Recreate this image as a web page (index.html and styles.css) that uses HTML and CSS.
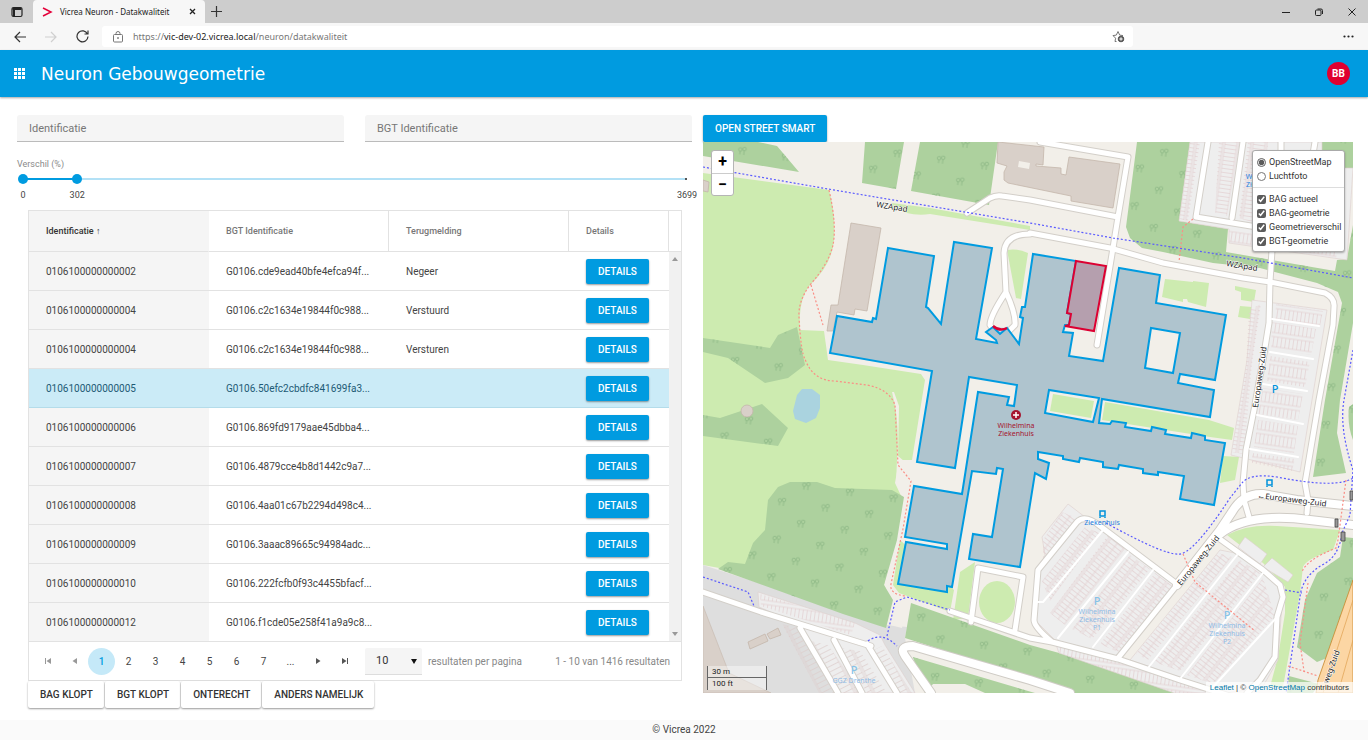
FILE: index.html
```
<!DOCTYPE html>
<html lang="nl">
<head>
  <meta charset="UTF-8" />
  <title>Vicrea Neuron - Datakwaliteit</title>
  <meta name="viewport" content="width=device-width, initial-scale=1.0" />
  <link rel="stylesheet" href="styles.css">
</head>
<body>
  <!-- Browser window -->
  <div class="tabbar">
    <button class="icon-btn tab-menu" aria-label="Tabbladen">
      <svg width="12" height="12" viewBox="0 0 12 12"><rect x="1" y="1.500" width="10" height="9" rx="1.500" fill="none" stroke="#222" stroke-width="1.200"/><path d="M1.500 3h9M3 3v7" stroke="#222" stroke-width="2"/></svg>
    </button>
    <div class="tab">
      <svg width="11" height="10" viewBox="0 0 11 10"><path d="M1 1l8 4-8 4" fill="none" stroke="#e4003a" stroke-width="1.500"/></svg>
      <span class="tab-title">Vicrea Neuron - Datakwaliteit</span>
      <button class="icon-btn" aria-label="Sluiten">
        <svg width="7" height="7" viewBox="0 0 7 7"><path d="M1 1l5 5M6 1l-5 5" stroke="#222" stroke-width="1.300"/></svg>
      </button>
    </div>
    <button class="icon-btn" aria-label="Nieuw tabblad">
      <svg width="11" height="11" viewBox="0 0 11 11"><path d="M5.500 0v11M0 5.500h11" stroke="#333" stroke-width="1.200"/></svg>
    </button>
    <div class="window-buttons">
      <button class="icon-btn" aria-label="Minimaliseren"><svg width="8" height="8" viewBox="0 0 8 8"><path d="M0 4.500h8" stroke="#222"/></svg></button>
      <button class="icon-btn" aria-label="Herstellen"><svg width="8" height="8" viewBox="0 0 8 8" fill="none" stroke="#222"><rect x=".5" y="2" width="5.500" height="5.500" rx="1"/><path d="M2.500 1h3.500a1.500 1.500 0 0 1 1.500 1.500v3.500"/></svg></button>
      <button class="icon-btn" aria-label="Venster sluiten"><svg width="8" height="8" viewBox="0 0 8 8"><path d="M.5.5l7 7M7.500.5l-7 7" stroke="#222"/></svg></button>
    </div>
  </div>

  <div class="toolbar">
    <button class="icon-btn" aria-label="Terug"><svg width="12" height="12" viewBox="0 0 12 12" fill="none" stroke="#333" stroke-width="1.200"><path d="M12 6H1M6 1L1 6l5 5"/></svg></button>
    <button class="icon-btn" aria-label="Vooruit"><svg width="12" height="12" viewBox="0 0 12 12" fill="none" stroke="#d0d0d0" stroke-width="1.200"><path d="M0 6h11M6 1l5 5-5 5"/></svg></button>
    <button class="icon-btn" aria-label="Vernieuwen"><svg width="13" height="13" viewBox="0 0 13 13" fill="none" stroke="#333" stroke-width="1.200"><path d="M11.500 4A5.500 5.500 0 1 0 12 6.500M12 .5V4H8.500"/></svg></button>
    <div class="address">
      <svg width="10" height="12" viewBox="0 0 10 12" fill="none" stroke="#777"><rect x=".5" y="3.500" width="9" height="7.500" rx="1"/><path d="M3 3.500V2.500a2 2 0 0 1 4 0v1"/><circle cx="5" cy="7" r=".5" fill="#777"/></svg>
      <span class="url">https://<b>vic-dev-02.vicrea.local</b>/neuron/datakwaliteit</span>
      <svg width="13" height="13" viewBox="0 0 13 13" fill="none" stroke="#777"><path d="M4.500 11.500l-1.500 0 .6-3.300L1 5.600l3.300-.5L6 1.500l1.700 3.600 3.300.5"/><circle cx="9" cy="9" r="2.800" fill="#555" stroke="#555"/><path d="M9 7.300v3.400M7.300 9h3.400" stroke="#fff"/></svg>
    </div>
    <button class="icon-btn more" aria-label="Meer"><svg width="11" height="3" viewBox="0 0 11 3" fill="#222"><circle cx="1.500" cy="1.500" r="1.100"/><circle cx="5.500" cy="1.500" r="1.100"/><circle cx="9.500" cy="1.500" r="1.100"/></svg></button>
  </div>

  <header class="app-header">
    <button class="icon-btn" aria-label="Menu">
      <svg width="11" height="11" viewBox="0 0 11 11" fill="#fff"><path d="M0 0h3v3H0zM4 0h3v3H4zM8 0h3v3H8zM0 4h3v3H0zM4 4h3v3H4zM8 4h3v3H8zM0 8h3v3H0zM4 8h3v3H4zM8 8h3v3H8z"/></svg>
    </button>
    <h1>Neuron Gebouwgeometrie</h1>
    <button class="avatar">BB</button>
  </header>

  <main>
    <section class="list">
      <div class="filters">
        <input type="text" placeholder="Identificatie" aria-label="Identificatie">
        <input type="text" placeholder="BGT Identificatie" aria-label="BGT Identificatie">
      </div>

      <label class="slider-label" for="verschilMin">Verschil (%)</label>
      <div class="slider">
        <div class="slider-track"><div class="slider-fill" style="width: 8.16%"></div></div>
        <input type="range" id="verschilMin" min="0" max="3699" value="0">
        <input type="range" id="verschilMax" min="0" max="3699" value="302" aria-label="Verschil maximaal (%)">
      </div>
      <div class="slider-values">
        <div><span style="left: 0%">0</span><span style="left: 8.16%">302</span><span style="left: 100%">3699</span></div>
      </div>

      <div class="grid">
        <div class="grid-main">
          <table>
            <thead>
              <tr><th class="sorted">Identificatie <i>↑</i></th><th>BGT Identificatie</th><th>Terugmelding</th><th>Details</th></tr>
            </thead>
            <tbody id="rows"></tbody>
          </table>
          <div class="scrollbar">
            <div class="scrollbar-head"></div>
            <div class="scrollbar-track">
              <svg width="6" height="4" viewBox="0 0 6 4"><path d="M0 4l3-4 3 4z" fill="#999"/></svg>
              <svg width="6" height="4" viewBox="0 0 6 4"><path d="M0 0l3 4 3-4z" fill="#999"/></svg>
            </div>
          </div>
        </div>
        <div class="pager">
          <button class="page" disabled aria-label="Eerste"><svg width="6" height="6" viewBox="0 0 6 6" fill="#999"><path d="M0 0h1v6H0zM6 0v6L1.500 3z"/></svg></button>
          <button class="page" disabled aria-label="Vorige"><svg width="6" height="6" viewBox="0 0 6 6" fill="#999"><path d="M5 0v6L.5 3z"/></svg></button>
          <button class="page current">1</button>
          <button class="page">2</button>
          <button class="page">3</button>
          <button class="page">4</button>
          <button class="page">5</button>
          <button class="page">6</button>
          <button class="page">7</button>
          <button class="page">...</button>
          <button class="page" aria-label="Volgende"><svg width="6" height="6" viewBox="0 0 6 6" fill="#555"><path d="M1 0v6l4.500-3z"/></svg></button>
          <button class="page" aria-label="Laatste"><svg width="6" height="6" viewBox="0 0 6 6" fill="#555"><path d="M5 0h1v6H5zM0 0v6l4.500-3z"/></svg></button>
          <div class="page-size">
            <select id="pageSize"><option>10</option><option>20</option><option>50</option></select>
            <svg width="6" height="5" viewBox="0 0 6 5"><path d="M0 0h6L3 5z" fill="#111"/></svg>
          </div>
          <label for="pageSize">resultaten per pagina</label>
          <span class="total">1 - 10 van 1416 resultaten</span>
        </div>
      </div>

      <div class="actions">
        <button>BAG KLOPT</button>
        <button>BGT KLOPT</button>
        <button>ONTERECHT</button>
        <button>ANDERS NAMELIJK</button>
      </div>
    </section>

    <section class="map-side">
      <button class="primary street">OPEN STREET SMART</button>
      <div class="map">
        <svg class="tiles" viewBox="703 142 650 551" preserveAspectRatio="xMidYMid slice">
          <defs>
            <pattern id="trees" width="44" height="38" patternUnits="userSpaceOnUse" patternTransform="rotate(8)">
              <g fill="none" stroke="#8db885" stroke-width=".8">
                <path d="M6 12v-3M10 12v-4M28 31v-3M32 31v-4"/>
                <circle cx="6" cy="7" r="1.800"/><circle cx="10" cy="6" r="1.800"/>
                <circle cx="28" cy="26" r="1.800"/><circle cx="32" cy="25" r="1.800"/>
              </g>
            </pattern>
            <pattern id="bays" width="14" height="4" patternUnits="userSpaceOnUse" patternTransform="rotate(8)">
              <path d="M1 .5h12M1 0v4M13 0v4" stroke="#e3cfd0" stroke-width=".7" fill="none"/>
            </pattern>
            <pattern id="baysUp" width="4" height="14" patternUnits="userSpaceOnUse" patternTransform="rotate(8)">
              <path d="M.5 2v10M0 2h4M0 12h4" stroke="#e3cfd0" stroke-width=".7" fill="none"/>
            </pattern>
            <pattern id="baysTilt" width="18" height="4" patternUnits="userSpaceOnUse" patternTransform="rotate(38)">
              <path d="M1 .5h16M1 0v4M9 0v4M17 0v4" stroke="#e3cfd0" stroke-width=".7" fill="none"/>
            </pattern>
            <pattern id="baysLeft" width="16" height="5" patternUnits="userSpaceOnUse" patternTransform="rotate(-27)">
              <path d="M1 .5h14M1 0v5M15 0v5" stroke="#dccdcc" stroke-width=".7" fill="none"/>
            </pattern>
            <g id="wood">
              <path d="M703 142h55l19 4 22 26-96-16zM865 142h39l-8 47-34-6zM920 142h78l-9 63-78-14z"/>
              <path d="M703 338l67 10 8-13 19-8 8 38-17 13-23 5-37-25-25-6zM703 415l17 3 42-14 26 24-10 18-75-10z"/>
              <path d="M718 569l10-7 17 2 8-21 12-13 3-30 10-13 12-5h27l18 6 57 2 12 7-7 43-13 45 9 15-7 28-43-14z"/>
              <path d="M911 603l119 42 175 48h-130l-45-15-125-40zM913 657l122 36h-50l-20-9h-32l-8 9-7-20z"/>
              <path d="M1137 142h53l-11 79 49 8-2 23 109 19 2-11 10-1 6-34v98l-13 77-3 33 9 40-33 4 12-77 17-97-4-11-21-9-57-15-47-5-50-11-21-4-12-10-4-11z"/>
              <path d="M1322 142h31v27l-31-2zM1349 407l4-3v36q-6-15-4-33z"/>
              <path d="M1353 538l-10-1-3 20-23 16-12 27-8 47 20 15 10-4 26-75zM1289 676l30 8-6 9h-26z"/>
            </g>
            <g id="streets">
              <path d="M967 213l23-15q6-3 12-2l28 4 88 17M1040 142l88 15-10 60-5 31-16 97M1030 234q-25 0-26 19l2 39q-16 24-16 33l5 8M1006 292q10 22 9 33l-8 8"/>
              <path d="M1030 233l80 15 53 15 80 15 27 4 55 11q10 5 9 14l-1 18-14 75-14 83 3 17-1 13M1272 250l-2 32-1 41-6 37-9 50-8 40-3 33 1 17 5 17"/>
              <path d="M1208 142l-12 75 61 10M1243 142l-11 76M1281 142v20M1315 142l-2 12"/>
              <path d="M950 611l80 27 22 4 66 17 62 21 50 16M1052 642q-18-15-18-22l4-50 39-48q8-8 23 4l77 58M1217 537l46 33 17 15 3 12-6 20-2 40-15 23-13 13M978 568l45 9-8 53M978 568l-7 54M1177 585l-59 73"/>
              <path d="M703 592l58 20 110 34M800 628l38 65M834 640l28 53M867 644l30 49"/>
            </g>
            <path id="mainRoads" d="M1353 506l-56-6-34-6q-20-1-31 18l-12 18-43 55M1353 525l-43-5q-62-8-90 14M931 693l-26-37q-7-10 8-10l117 34 40 13"/>
          </defs>
          <rect x="703" y="142" width="650" height="551" fill="#f2efe9"/>

          <!-- grass -->
          <g fill="#cdebb0">
            <path d="M703 173L829 190Q836 215 834 240T810 285Q798 300 800 330L824 331 828 360 863 365 921 374 925 380 912 460 899 460 895 483 903 500 884 585 893 600 703 565z"/>
            <path d="M892 203l38 5 100 18v4l-100-16q-20 3-38-7z"/>
            <path d="M1007 250q10-2 21 3l-7 46-5-1z"/>
            <path d="M1165 279l28 3v-1l16 2-3 24-18-5-1-3h-4v3l-21-5z"/>
            <path d="M1235 286l21 4-2 12-13-2v-8l-6-2zM1240 306l12 1-2 12-12-2z"/>
            <path d="M1105 402l104 18 25 8-2 12-22-3-108-17zM1223 456l16 1-4 23-15 3z"/>
            <path d="M900 540l-7 45 6 8 51 19 4-22zM960 572l15-10-7 56-15 2z"/>
            <path d="M1227 535q20-11 50-9l63 4-7 20q-27 9-30 17l-3 26-17 94h-13l8-30 7-44v-26l-22-24z"/>
            <ellipse cx="997" cy="602" rx="18" ry="21"/>
          </g>

          <!-- built-up ground -->
          <path d="M703 565l185 60 19 2-2 11 10 55H703z" fill="#dedede"/>
          <path d="M703 606l26 67 42 20h-68z" fill="#d9d0c9" stroke="#c9bbb2" stroke-width=".7"/>
          <!-- dirt strip along the footpath -->
          <path d="M892 392q8 30 5 68l-1 24 8 14-5 42-14 50 6 12-5 22 16 4 4-24-12-8-6-10 22-120-12-10 1-50-5-14z" fill="#f2efe9"/>

          <use href="#wood" fill="#add19e"/>
          <use href="#wood" fill="url(#trees)"/>
          <path d="M797 395l5-6h10l8 6v13l-4 10-10 5-11-4-2-8z" fill="#aad3df"/>

          <!-- parking -->
          <g fill="#eee" stroke="#ddcfcc" stroke-width=".6">
            <path d="M1190 142h132v26h31l-6 92-118-17v-14l-50-8z"/>
            <path d="M1252 300l75 10-27 162-69-17 16-95z"/>
            <path d="M1068 504l17 13 18 11 72 57-55 72-65-17-20-20 2-47 8-18-3-18z"/>
            <path d="M1220 550l15 3 30 20 18 17-5 70-16 28-37 5-95-33z"/>
            <path d="M1238 547l7-10 22 17-7 10zM1263 567l9-9 21 17-5 7z"/>
            <path d="M758 592l97 31 25 12 5 10 30 48H837l-38-69-40-17z"/>
            <path d="M1055 642l155 47-3 4h-33l-115-40z"/>
          </g>
          <path d="M1190 142l10 0-12 79-9-2zM1219 142h21l-13 74-12-3zM1248 142h20l-5 84-24-8zM1249 310l12-6-9 60-8 90-12-2 14-86z" fill="url(#bays)"/>
          <path d="M1276 304l47 7-3 15-45-6zM1272 322l44 7-5 26-40-7zM1270 356l40 6-5 25-38-6zM1263 388l40 6-5 26-40-6zM1258 420l40 6-4 27-40-6zM1252 453l43 6-3 12-40-8zM1229 230l110 16-3 12-107-15z" fill="url(#baysUp)"/>
          <path d="M1062 512l15 6-34 42v-20zM1085 527l15 6-50 68-8-20zM1108 535l17 14-60 76-15-12zM1130 555l20 14-58 70-20-10zM1155 573l18 13-55 66-18-8zM1218 553l14 4-84 103-12-6zM1240 560l20 13-80 98-26-9zM1263 578l12 38-62 68-26-9z" fill="url(#baysTilt)"/>
          <path d="M1055 642l155 47-3 4h-33l-115-40zM760 594l95 29-4 12-90-29z" fill="url(#baysUp)"/>
          <path d="M782 624l17 4 38 65h-18zM806 640l22 5 34 48h-22zM840 648l20 3 27 42h-20zM874 650l8-4 30 47h-16z" fill="url(#baysLeft)"/>

          <!-- buildings -->
          <g fill="#d9d0c9" stroke="#c4b6ab" stroke-width=".8">
            <path d="M851 223l30 5-14 83-12-2-1 6-17-3-4 19h-6l4-26h7z"/>
            <path d="M703 180l6 2-1 10-5-1z"/>
            <path d="M998 142l46 5-1 18-7-1v2l25 2v6l5 1 3-18 51 7-7 44-42-7v-5l-63-13-4-3v-8l3-6-10-3z"/>
            <path d="M748 642l17-8 3 7-18 8zM767 634l11-6 3 7-11 4z"/>
            <circle cx="747" cy="411" r="6"/>
          </g>
          <path d="M1019 161l11 2-1 6-11-2z" fill="#f2efe9"/>

          <!-- motorway -->
          <path d="M1353 580l-35 100-2 13h37z" fill="#fcd6a4" stroke="#c8872b" stroke-width=".8"/>
          <path d="M1353 600l-30 93M1353 640l-15 53" stroke="#e0a050" stroke-width=".7" fill="none"/>

          <!-- roads: casing first, then white -->
          <g fill="none" stroke-linecap="round" stroke-linejoin="round">
            <use href="#streets" stroke="#d3cfc9" stroke-width="7"/>
            <use href="#mainRoads" stroke="#cfcbc5" stroke-width="10"/>
            <use href="#streets" stroke="#fff" stroke-width="5"/>
            <use href="#mainRoads" stroke="#fff" stroke-width="8"/>
            <path d="M1272 319l47 7M1270 352l43 7M1263 384l44 7M1257 415l46 9M1250 449l48 8M1103 530l-48 58-12 14h-7M1128 552l-70 86M1153 570l-60 77M1237 555l-89 113M1263 573l-83 106M1277 617l-64 70" stroke="#fff" stroke-width="2"/>
          </g>

          <!-- cycle and foot paths -->
          <g fill="none" stroke="#5a5aff" stroke-width="1.200" stroke-dasharray="2 2">
            <path d="M703 167l125 22 202 34 83 15 130 20 110 20M703 577l45 15 6 14M887 636l8-34 12-5 43 13M868 641q14-10 29 5"/>
            <path d="M1106 523q58 32 72 31 14 2 52-56l12-15q8-10 35-6 60 12 76 1M1353 350l-9 50q-5 28 9 70l-3 45-8 18q-3 24-20 32-20 12-22 32l-16 110M1285 590l17 3"/>
          </g>
          <g fill="none" stroke="#fa8e85" stroke-width="1.200" stroke-dasharray="2 2">
            <path d="M829 190q8 35 4 55-4 18-23 40-12 16-11 32 2 36 6 42 8 22 30 22l32 4q22 4 28 20l3 60 13 16-8 48-12 55q-2 10 14 12M811 285l12 40"/>
            <path d="M1193 219l-10 8-4 35M1183 554l12 28 60 49M1346 480l-8 60-2 8q-30 12-34 24M1308 583l-8 60 4 28M1288 666l30 10"/>
          </g>

          <!-- building geometry -->
          <path d="M993 327l14 1 1 6-8 4-9-2z" fill="#b9dcee"/>
          <path class="geom" d="M888 248L934 256 926 307 928 308 941 324 954 242 992 248 976 339 997 343 996 340 986 332 993 327 1000 334 1007 328 1019 344 1023 318 1020 317 1022 307 1025 307 1033 254 1076 261 1067 313 1071 314 1069 325 1065 325 1063 332 1073 333 1069 356 1103 361 1119 268 1160 275 1156 303 1226 315 1215 380 1180 374 1178 383 1214 390 1210 417 1102 399 1099 423 1110 424 1112 421 1126 423 1125 427 1151 431 1152 427 1166 430 1165 434 1191 438 1192 433 1205 436 1205 440 1225 443 1214 505 1180 499 1184 476 1158 472 1158 475 1143 473 1143 469 1119 465 1118 469 1103 467 1103 462 1080 458 1079 462 1063 459 1063 456 1038 452 1038 459 1049 463 1046 479 1035 473 1020 567 969 559 973 534 992 537 1003 469 997 468 996 474 972 471 952 587 947 586 947 592 898 584 906 542 947 549 947 544 905 537 914 486 962 494 978 392 1009 397 1007 405 1014 406 1017 385 969 377 955 468 917 462 932 371 830 353 837 316 872 322 873 318 876 319zM1151 328L1145 368 1173 373 1180 333zM1049 390L1045 413 1093 422 1099 398z"/>
          <path d="M1053 394l41 7-3 17-41-7z" fill="#cdebb0"/>
          <path class="diff" d="M1076 261L1106 266 1094 331 1065 326 1069 325 1071 314 1067 313z"/>
          <path d="M993 326q7 6 14 2" fill="none" stroke="#dc0032" stroke-width="2.500"/>

          <!-- labels -->
          <g class="label">
            <text x="876" y="207" transform="rotate(9 876 207)">WZApad</text>
            <text x="1226" y="266" transform="rotate(9 1226 266)">WZApad</text>
            <text x="1258" y="408" transform="rotate(-82 1258 408)">Europaweg-Zuid</text>
            <text x="1257" y="498" transform="rotate(7 1257 498)">←Europaweg-Zuid</text>
            <text x="1181" y="586" transform="rotate(-51 1181 586)">Europaweg-Zuid</text>
            <text x="1328" y="684" transform="rotate(-70 1328 684)">weg-Zuid</text>
          </g>
          <circle cx="1016" cy="415" r="5" fill="#a5142f"/>
          <path d="M1016 412v6M1013 415h6" stroke="#fff" stroke-width="1.500"/>
          <g class="poi">
            <text x="1016" y="428" fill="#a5142f">Wilhelmina</text>
            <text x="1016" y="436" fill="#a5142f">Ziekenhuis</text>
          </g>
          <g class="poi" fill="#1f80e0">
            <text x="1102" y="525">Ziekenhuis</text>
            <text x="1249" y="179">W</text>
            <text x="1249" y="187">Zi</text>
          </g>
          <g class="poi" fill="#8fbbe6">
            <text x="1097" y="614">Wilhelmina</text><text x="1097" y="622">Ziekenhuis</text><text x="1097" y="630">P1</text>
            <text x="1227" y="628">Wilhelmina</text><text x="1227" y="636">Ziekenhuis</text><text x="1227" y="644">P2</text>
            <text x="854" y="683">GGZ Drenthe</text>
          </g>
          <g class="parking">
            <text x="1275" y="393" fill="#0092da">P</text>
            <text x="1097" y="605">P</text>
            <text x="1227" y="619">P</text>
            <text x="854" y="674">P</text>
          </g>
          <g fill="none" stroke="#0092da" stroke-width="1.500">
            <path d="M1100 511h5v5h-5zM1100 517v1M1105 517v1M1267 480h5v5h-5zM1267 486v1M1272 486v1"/>
          </g>
          <g fill="#999" stroke="#444" stroke-width=".8">
            <path d="M1350 491h3v9h-3zM1335 519h3v8h-3zM1341 532h4v9h-4z"/>
          </g>
        </svg>

        <div class="zoom">
          <button aria-label="Inzoomen">+</button>
          <button aria-label="Uitzoomen">−</button>
        </div>
        <div class="layers">
          <label><input type="radio" name="base" checked>OpenStreetMap</label>
          <label><input type="radio" name="base">Luchtfoto</label>
          <hr>
          <label><input type="checkbox" checked>BAG actueel</label>
          <label><input type="checkbox" checked>BAG-geometrie</label>
          <label><input type="checkbox" checked>Geometrieverschil</label>
          <label><input type="checkbox" checked>BGT-geometrie</label>
        </div>
        <div class="scale">
          <div class="metric">30 m</div>
          <div class="imperial">100 ft</div>
        </div>
        <div class="attribution"><a href="#">Leaflet</a> | © <a href="#">OpenStreetMap</a> contributors</div>
      </div>
    </section>
  </main>

  <footer>© Vicrea 2022</footer>

  <script>
  const items = [
    ["0106100000000002", "G0106.cde9ead40bfe4efca94f...", "Negeer"],
    ["0106100000000004", "G0106.c2c1634e19844f0c988...", "Verstuurd"],
    ["0106100000000004", "G0106.c2c1634e19844f0c988...", "Versturen"],
    ["0106100000000005", "G0106.50efc2cbdfc841699fa3...", ""],
    ["0106100000000006", "G0106.869fd9179aae45dbba4...", ""],
    ["0106100000000007", "G0106.4879cce4b8d1442c9a7...", ""],
    ["0106100000000008", "G0106.4aa01c67b2294d498c4...", ""],
    ["0106100000000009", "G0106.3aaac89665c94984adc...", ""],
    ["0106100000000010", "G0106.222fcfb0f93c4455bfacf...", ""],
    ["0106100000000012", "G0106.f1cde05e258f41a9a9c8...", ""]
  ];
  const selected = 3;

  const tbody = document.getElementById("rows");
  items.forEach(([id, bgt, status], i) => {
    const row = document.createElement("tr");
    if (i === selected) row.className = "selected";
    row.innerHTML = `<td class="sorted">${id}</td><td>${bgt}</td><td>${status}</td><td><button class="primary">DETAILS</button></td>`;
    tbody.appendChild(row);
  });
  </script>
</body>
</html>
```
FILE: styles.css
```
* {
  box-sizing: border-box;
}
body {
  margin: 0;
  min-height: 100vh;
  display: flex;
  flex-direction: column;
  background: #fff;
  color: #444;
  font-family: Roboto, Arial, sans-serif;
  font-size: 10px;
}
button, input, select {
  font-family: inherit;
}
button {
  cursor: pointer;
}
.icon-btn {
  display: flex;
  border: none;
  background: none;
  padding: 0;
}

/* browser window */
.tabbar {
  display: flex;
  align-items: center;
  height: 23px;
  background: #cdcdcd;
  font-family: "Noto Sans", sans-serif;
}
.tab-menu {
  width: 33px;
  justify-content: center;
}
.tab {
  display: flex;
  align-items: center;
  align-self: stretch;
  width: 172px;
  margin-right: 6px;
  padding: 0 9px;
  gap: 7px;
  background: #f7f7f7;
  border-radius: 4px 4px 0 0;
}
.tab-title {
  flex: 1;
  font-size: 8px;
  color: #222;
  white-space: nowrap;
}
.window-buttons {
  display: flex;
  gap: 25px;
  margin-left: auto;
  padding-right: 12px;
}
.toolbar {
  display: flex;
  align-items: center;
  height: 27px;
  gap: 19px;
  padding: 0 14px;
  background: #f7f7f7;
  font-family: "Noto Sans", sans-serif;
}
.address {
  display: flex;
  align-items: center;
  width: 1031px;
  height: 21px;
  margin-left: -6px;
  padding: 0 8px 0 11px;
  gap: 10px;
  background: #fff;
  border-radius: 3px;
}
.url {
  flex: 1;
  font-size: 9px;
  color: #777;
}
.url b {
  font-weight: normal;
  color: #222;
}
.more {
  margin-left: auto;
}

.app-header {
  display: flex;
  align-items: center;
  height: 47px;
  padding: 0 18px 0 14px;
  gap: 16px;
  background: #009be0;
  box-shadow: 0 1px 2px rgba(0, 0, 0, .35);
}
.app-header h1 {
  flex: 1;
  margin: 0;
  color: #fff;
  font-family: Verdana, "DejaVu Sans", sans-serif;
  font-size: 17px;
  font-weight: normal;
}
.avatar {
  width: 23px;
  height: 23px;
  padding: 0;
  border: none;
  border-radius: 50%;
  background: #e0002f;
  color: #fff;
  font-size: 10px;
  font-weight: bold;
}

main {
  flex: 1;
  display: grid;
  grid-template-columns: minmax(0, 675fr) minmax(0, 650fr);
  gap: 11px;
  padding: 18px 15px 10px 17px;
}

/* filters */
.filters {
  display: grid;
  grid-template-columns: 1fr 1fr;
  gap: 21px;
}
.filters input {
  height: 27px;
  padding: 0 12px;
  border: none;
  border-bottom: 1px solid #bbb;
  border-radius: 3px 3px 0 0;
  background: #f5f5f5;
  font-size: 11px;
}
.filters input::placeholder {
  color: #777;
}
.slider-label {
  display: block;
  margin-top: 17px;
  color: #8a8a8a;
  font-size: 9px;
  line-height: 11px;
}
.slider {
  position: relative;
  height: 10px;
  margin: 4px 0 0 1px;
}
.slider-track {
  position: absolute;
  inset: 4px 5px;
  background: #b3e1f6;
  border-right: 2px solid #555;
}
.slider-fill {
  height: 2px;
  background: #009be0;
}
.slider input {
  position: absolute;
  inset: 0;
  width: 100%;
  height: 10px;
  margin: 0;
  appearance: none;
  background: none;
  pointer-events: none;
}
.slider input::-webkit-slider-thumb {
  appearance: none;
  width: 10px;
  height: 10px;
  border-radius: 50%;
  background: #009be0;
  pointer-events: auto;
}
.slider-values {
  height: 26px;
  padding: 6px 5px 0;
  margin-left: 1px;
  font-size: 9px;
  line-height: 11px;
}
.slider-values div {
  position: relative;
}
.slider-values span {
  position: absolute;
  transform: translateX(-50%);
}

/* table */
.grid {
  margin: 0 10px 0 11px;
  border: 1px solid #e2e2e2;
}
.grid-main {
  display: flex;
}
table {
  flex: 1;
  width: 100%;
  table-layout: fixed;
  border-collapse: separate;
  border-spacing: 0;
}
th, td {
  padding: 0 17px;
  border-bottom: 1px solid #e2e2e2;
  text-align: left;
  white-space: nowrap;
}
th {
  height: 41px;
  border-right: 1px solid #e2e2e2;
  color: #777;
  font-size: 9px;
  font-weight: 500;
}
th:last-child {
  width: 100px;
}
th.sorted {
  color: #333;
  border-right-color: #f5f5f5;
}
th i {
  font-style: normal;
}
td {
  height: 39px;
}
.sorted {
  background: #f5f5f5;
}
.selected td {
  background: #cbebf7;
  border-color: #b4dcea;
  color: #1d5a75;
}
.primary {
  border: none;
  border-radius: 2px;
  background: #009be0;
  color: #fff;
  font-size: 10px;
  font-weight: 500;
  box-shadow: 0 1px 2px rgba(0, 0, 0, .4);
}
td .primary {
  display: block;
  width: 63px;
  height: 25px;
  padding: 0;
}
.scrollbar {
  display: flex;
  flex: none;
  flex-direction: column;
  width: 12px;
}
.scrollbar-head {
  height: 41px;
  border-bottom: 1px solid #e2e2e2;
}
.scrollbar-track {
  flex: 1;
  display: flex;
  flex-direction: column;
  align-items: center;
  justify-content: space-between;
  padding: 5px 0;
  background: #f1f1f1;
  border-bottom: 1px solid #e2e2e2;
}

.pager {
  display: flex;
  align-items: center;
  height: 38px;
  padding: 0 11px 0 5px;
  color: #888;
}
.page {
  display: flex;
  align-items: center;
  justify-content: center;
  width: 27px;
  height: 27px;
  padding: 0;
  border: none;
  border-radius: 50%;
  background: none;
  color: #444;
  font-size: 10px;
}
.current {
  background: #c5e9f8;
  color: #009be0;
  font-weight: 500;
}
.page-size {
  position: relative;
  margin: 0 6px 0 7px;
}
.page-size select {
  display: block;
  width: 57px;
  height: 27px;
  padding: 0 11px;
  border: none;
  border-bottom: 1px solid #ddd;
  border-radius: 2px 2px 0 0;
  appearance: none;
  background: #f5f5f5;
  color: #333;
  font-size: 11px;
}
.page-size svg {
  position: absolute;
  right: 5px;
  top: 11px;
  pointer-events: none;
}
.total {
  margin-left: auto;
}

.actions {
  display: flex;
  gap: 1px;
  margin-left: 11px;
}
.actions button {
  height: 27px;
  padding: 0 11px 0 12px;
  border: none;
  border-radius: 2px;
  background: #fff;
  color: #333;
  font-size: 10px;
  font-weight: 500;
  box-shadow: 0 1px 2px rgba(0, 0, 0, .4);
}

/* map */
.map-side {
  display: flex;
  flex-direction: column;
  align-items: flex-start;
}
.street {
  height: 27px;
  padding: 0 12px;
}
.map {
  position: relative;
  width: 100%;
  height: 551px;
  overflow: hidden;
}
.tiles {
  display: block;
  width: 100%;
  height: 100%;
}
.geom {
  fill: #afc4ce;
  fill-rule: evenodd;
  stroke: #009be0;
  stroke-width: 2;
}
.diff {
  fill: #b59fae;
  stroke: #dc0032;
  stroke-width: 2;
}
.label {
  font-family: "Noto Sans", sans-serif;
  font-size: 8px;
  fill: #222;
  paint-order: stroke;
  stroke: #fff;
  stroke-width: 1px;
}
.poi {
  font-family: "Noto Sans", sans-serif;
  font-size: 7px;
  text-anchor: middle;
}
.parking {
  font-family: "Noto Sans", sans-serif;
  font-size: 11px;
  font-weight: 500;
  text-anchor: middle;
  fill: #86c3e8;
}
.zoom {
  position: absolute;
  left: 8px;
  top: 8px;
  width: 23px;
  border: 1px solid #b5b5b5;
  border-radius: 3px;
  background: #fff;
}
.zoom button {
  display: block;
  width: 100%;
  height: 22px;
  padding: 0;
  border: none;
  background: none;
  color: #000;
  font-size: 16px;
  font-weight: bold;
  line-height: 20px;
}
.zoom button + button {
  border-top: 1px solid #ccc;
}
.layers {
  position: absolute;
  right: 8px;
  top: 8px;
  width: 93px;
  padding: 4px 4px 3px;
  border: 1px solid #aaa;
  border-radius: 3px;
  background: #fff;
  color: #333;
  font-size: 9px;
  box-shadow: 0 1px 2px rgba(0, 0, 0, .3);
}
.layers label {
  display: flex;
  align-items: center;
  gap: 3px;
  height: 14px;
  white-space: nowrap;
}
.layers input {
  width: 9px;
  height: 9px;
  margin: 0;
  accent-color: #5c5c5c;
}
.layers hr {
  height: 1px;
  margin: 4px -4px;
  border: none;
  background: #ddd;
}
.scale {
  position: absolute;
  left: 4px;
  bottom: 3px;
  width: 60px;
  color: #222;
  font-size: 8px;
}
.scale div {
  height: 12px;
  padding-left: 4px;
  border: solid #666;
  border-width: 0 1px 1px;
  background: rgba(255, 255, 255, .4);
  line-height: 12px;
}
.scale .imperial {
  border-width: 0 1px;
}
.attribution {
  position: absolute;
  right: 0;
  bottom: 0;
  padding: 0 4px;
  background: rgba(255, 255, 255, .7);
  color: #333;
  font-family: "Liberation Sans", Arial, sans-serif;
  font-size: 8px;
  line-height: 11px;
}
.attribution a {
  color: #0078a8;
  text-decoration: none;
}

footer {
  height: 20px;
  background: #fafafa;
  font-size: 10px;
  line-height: 20px;
  text-align: center;
}
```
